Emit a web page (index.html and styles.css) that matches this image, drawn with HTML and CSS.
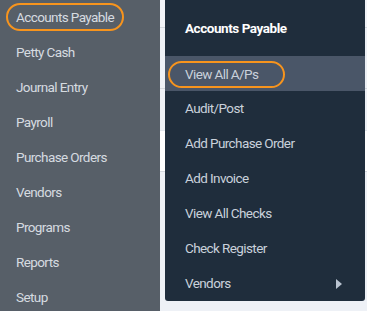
FILE: index.html
```html
<!DOCTYPE html>
<html>
<head>
<meta charset="utf-8">
<link rel="stylesheet" href="styles.css">
</head>
<body>
<div class="app">
  <nav class="sidebar">
    <div class="side-item"><span class="ring ring-side">Accounts Payable</span></div>
    <div class="side-item">Petty Cash</div>
    <div class="side-item">Journal Entry</div>
    <div class="side-item">Payroll</div>
    <div class="side-item">Purchase Orders</div>
    <div class="side-item">Vendors</div>
    <div class="side-item">Programs</div>
    <div class="side-item">Reports</div>
    <div class="side-item">Setup</div>
  </nav>
  <main class="content">
    <div class="band band-a"></div>
    <div class="band band-b"></div>
    <div class="band band-c"></div>
    <div class="band band-d"></div>
  </main>
  <div class="flyout">
    <div class="fly-head">Accounts Payable</div>
    <div class="fly-item active"><span class="ring ring-fly">View All A/Ps</span></div>
    <div class="fly-item">Audit/Post</div>
    <div class="fly-item">Add Purchase Order</div>
    <div class="fly-item">Add Invoice</div>
    <div class="fly-item">View All Checks</div>
    <div class="fly-item">Check Register</div>
    <div class="fly-item">Vendors <span class="caret"></span></div>
  </div>
</div>
</body>
</html>
```
FILE: styles.css
```css
html, body {
  margin: 0;
  padding: 0;
}
body {
  background: #eef1f6;
  font-family: Roboto, "Liberation Sans", Arial, sans-serif;
  width: 367px;
  height: 311px;
  overflow: hidden;
}
.app {
  position: relative;
  display: flex;
  height: 311px;
}
.sidebar {
  width: 160px;
  flex: none;
  background: #575f68;
  height: 311px;
}
.side-item {
  height: 35px;
  line-height: 35px;
  padding-left: 16px;
  font-size: 13.5px;
  letter-spacing: -0.6px;
  color: #d6dbe0;
  white-space: nowrap;
}
.content {
  flex: 1;
  display: flex;
  flex-direction: column;
}
.band {
  border-bottom: 1px solid #d5d9df;
}
.band-a { height: 27px; background: #f2f4f8; }
.band-b { height: 60px; background: #eef1f6; }
.band-c { height: 41px; background: #eef1f6; border-bottom-color: #e3e7ec; }
.band-d { height: 40px; background: #ffffff; }
.flyout {
  position: absolute;
  left: 165px;
  top: 0;
  width: 200px;
  background: #1f2d3c;
  border-radius: 0 0 3px 3px;
}
.fly-head {
  height: 56px;
  line-height: 56px;
  padding-left: 20px;
  font-size: 13.5px;
  letter-spacing: -0.45px;
  font-weight: bold;
  color: #ffffff;
}
.fly-item {
  height: 35px;
  line-height: 35px;
  padding-left: 20px;
  font-size: 13.5px;
  letter-spacing: -0.6px;
  color: #c9d1db;
  display: flex;
  align-items: center;
  white-space: nowrap;
}
.fly-item.active {
  background: #4a5668;
}
.ring {
  position: relative;
  display: inline-block;
  line-height: 16px;
}
.ring::after {
  content: "";
  position: absolute;
  top: 50%;
  border: 2px solid #f7941d;
  border-radius: 14px;
  pointer-events: none;
}
.ring-side::after {
  left: -10px;
  right: -10px;
  height: 24px;
  margin-top: -14px;
}
.ring-fly::after {
  left: -17px;
  width: 113px;
  height: 23px;
  margin-top: -13px;
}
.caret {
  margin-left: auto;
  margin-right: 23px;
  width: 0;
  height: 0;
  border-top: 5px solid transparent;
  border-bottom: 5px solid transparent;
  border-left: 6px solid #b9c3d0;
}
```
